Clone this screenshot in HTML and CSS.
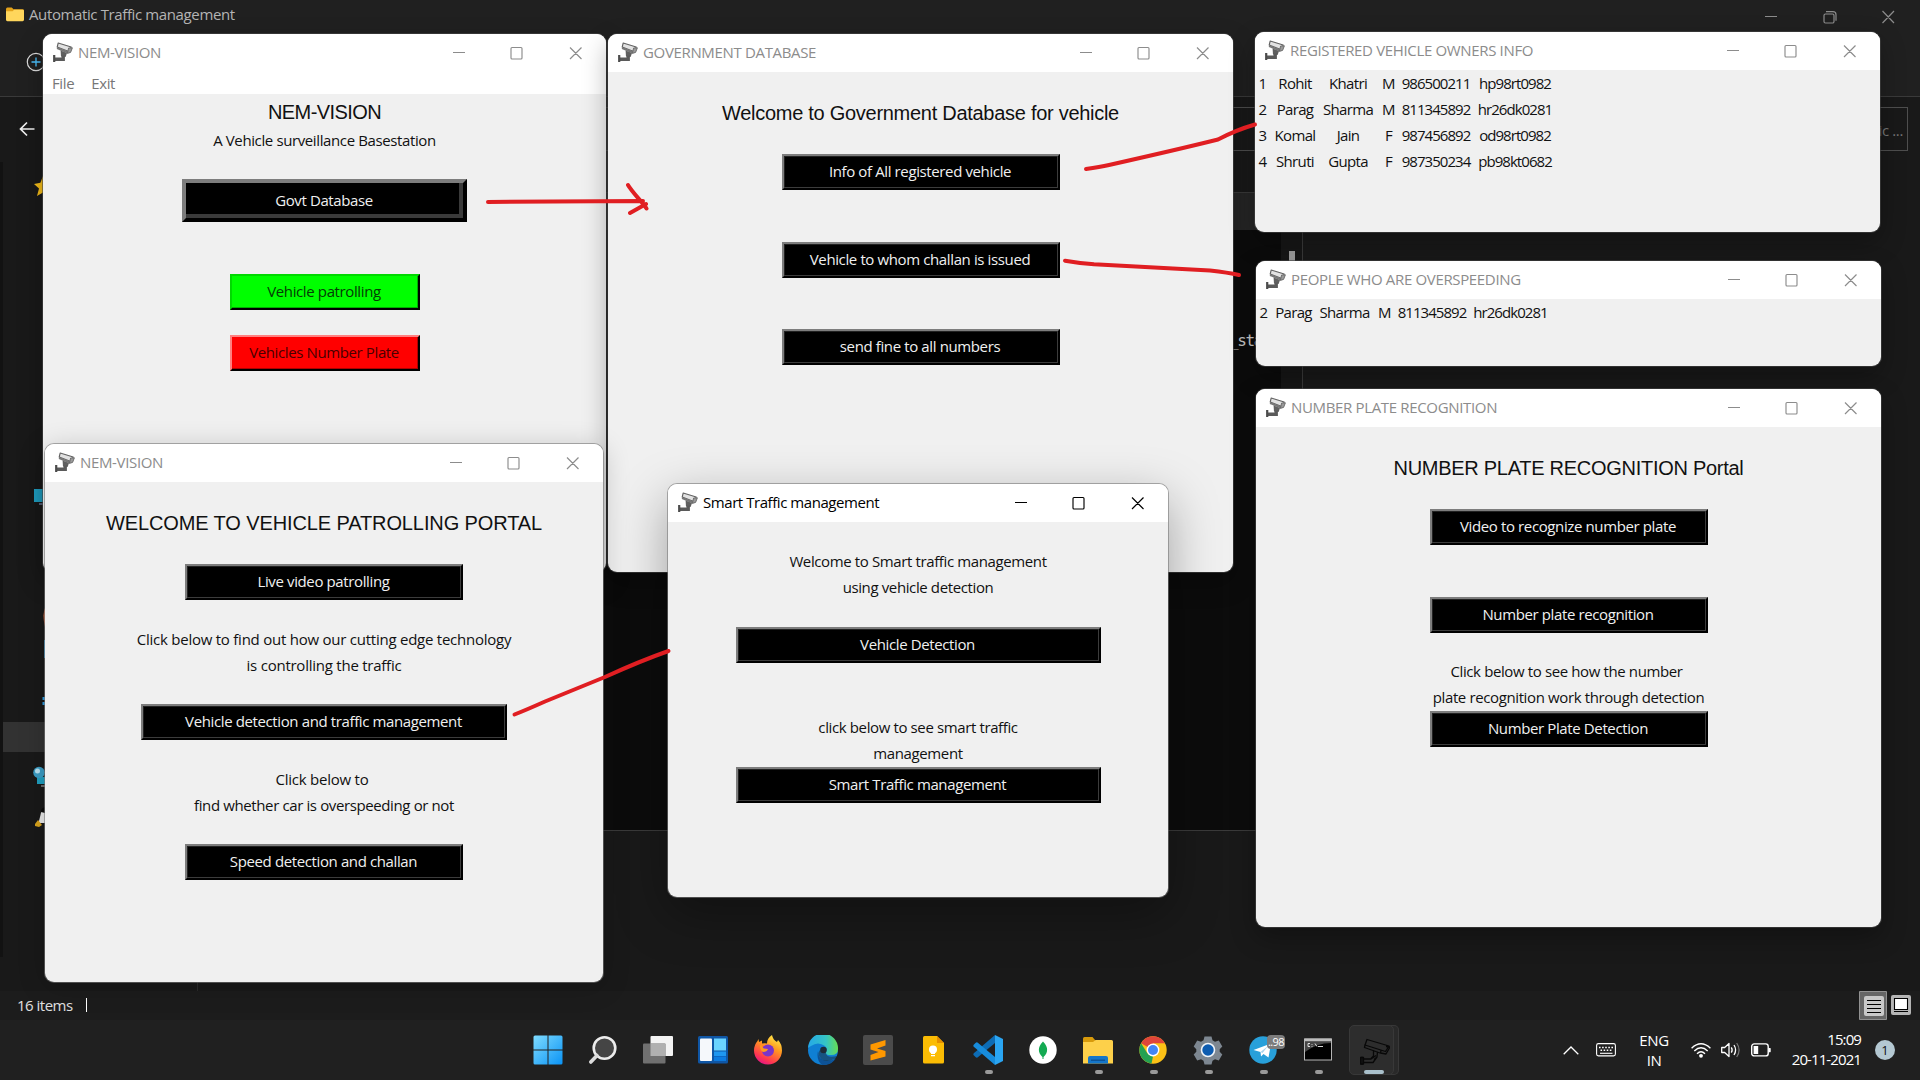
FILE: index.html
```html
<!DOCTYPE html>
<html lang="en">
<head>
<meta charset="utf-8">
<title>Smart Traffic management</title>
<link rel="stylesheet" href="styles.css">
</head>
<body>
<svg class="defs" aria-hidden="true">
  <symbol id="cam" viewBox="0 0 20 20">
    <path d="M5.200 1 L18.200 5 L15.800 9.600 L4.200 5Z" fill="#e2e2e2" stroke="#626262" stroke-width="1.100" stroke-linejoin="round"/>
    <path d="M4 5 L15.400 9.600 L14.600 11.400 L3.800 7Z" fill="#777"/>
    <path d="M15.600 6 L19.400 5.800 L17.600 10.400 L14.400 11.400Z" fill="#9a9a9a" stroke="#666" stroke-width=".9"/>
    <path d="M7.600 8.600 L14 11 L12.600 15 L8 14.400Z" fill="#606060"/>
    <path d="M10.200 13.500 V17.200 H2" fill="none" stroke="#5a5a5a" stroke-width="3.400"/>
    <path d="M1.200 13 V20" stroke="#4c4c4c" stroke-width="2.200"/>
  </symbol>
  <symbol id="caps" viewBox="0 0 143 18">
    <path d="M0 8.500H12M59 3.500h9a1 1 0 0 1 1 1v9.500a1 1 0 0 1 -1 1h-9a1 1 0 0 1 -1 -1v-9.500a1 1 0 0 1 1 -1zM117 3.500l11.500 11.500M128.500 3.500l-11.500 11.500" fill="none" stroke="currentColor" stroke-width="1.150"/>
  </symbol>
</svg>

<div class="desktop">
  <div class="explorer">
    <header class="ex-title">
      <svg class="ex-folder" viewBox="0 0 19 15"><path d="M0 2Q0 0 1.500 0H6L8 2H17.500Q19 2 19 3.500V7H0Z" fill="#e3a21a"/><path d="M0 4H7L8.500 2.500H17.500Q19 2.500 19 4V13Q19 14.500 17.500 14.500H1.500Q0 14.500 0 13Z" fill="#ffd65c"/></svg>
      <span class="ex-name">Automatic Traffic management</span>
      <svg class="ex-caps" viewBox="0 0 132 16"><path d="M0 7.500H12M60.500 5h7a1.500 1.500 0 0 1 1.500 1.500v6a1.500 1.500 0 0 1 -1.500 1.500h-7a1.500 1.500 0 0 1 -1.500 -1.500v-6a1.500 1.500 0 0 1 1.500 -1.500zM61 2.700h7a3 3 0 0 1 3 3v6M117.500 2l11.500 12M129 2l-11.500 12" fill="none" stroke="#8c8c8c" stroke-width="1.200"/></svg>
    </header>
    <div class="ex-tools">
      <svg viewBox="0 0 22 20" width="22" height="20"><circle cx="10" cy="10" r="8.700" fill="none" stroke="#ddd" stroke-width="1.200"/><path d="M10 5.500v9M5.500 10h9" stroke="#4cc2ff" stroke-width="1.300"/></svg>
    </div>
    <div class="ex-address">
      <svg viewBox="0 0 16 16" width="16" height="16"><path d="M15.500 8H1.500M8 1.500L1.500 8L8 14.500" fill="none" stroke="#f2f2f2" stroke-width="1.700"/></svg>
      <div class="ex-box">ic ...</div>
    </div>
    <div class="ex-main">
      <aside class="ex-nav">
        <svg viewBox="0 0 45 800" width="45" height="800">
          <rect x="0" y="5" width="3" height="795" fill="#121212"/>
          <rect x="3" y="565" width="42" height="30" fill="#323232"/>
          <path d="M43 19l-2.600 6.800L34 27l5 4.600L37 39l6-3.500 2 1V17z" fill="#f5bd19"/>
          <path d="M34 332h11v13H34z" fill="#20a4c8"/><path d="M39 347h6" stroke="#9ad" stroke-width="1"/>
          <path d="M45 451q-3 6 0 19z" fill="#d9683c"/><path d="M44 483h1v18h-1z" fill="#2196d8"/>
          <path d="M42.500 540h2.500v3h-2.500zM42.500 545h2.500v3h-2.500z" fill="#2f9be0"/>
          <path d="M37 620h8v7h-8z" fill="#1f9fc0"/><circle cx="39" cy="615.500" r="5.800" fill="#3a9cc4"/><circle cx="37.500" cy="614" r="2.500" fill="#b9e2f2"/><path d="M41 629h4" stroke="#bbb"/>
          <path d="M45 652q-4 1-4.500 6l-2 8h6.500z" fill="#e8e8e8"/><path d="M45 650q-4 1-4 5l4 1z" fill="#0a0a0a"/><path d="M35 667l3-4 4 5-3 2-4-1z" fill="#d9a41c"/>
        </svg>
      </aside>
      <div class="terminal">
        <div class="term-bar"></div>
        <div class="term-body"><span class="term-text">_sta</span><div class="term-scroll"><i></i></div></div>
      </div>
    </div>
    <footer class="ex-status">
      <span class="ex-count">16 items</span><i class="caret"></i>
      <svg class="view-buttons" viewBox="0 0 54 29"><path d="M.5.500h27v28H.5z" fill="#666" stroke="#919191"/><rect x="5" y="5" width="20" height="20" rx="2" fill="#c8c8c8"/><path d="M8 9.500h14M8 13.500h14M8 17.500h14M8 21.500h14" stroke="#000" stroke-width="1.100"/><rect x="32" y="4" width="20" height="20" rx="2" fill="#b4b4b4"/><path d="M35.500 7.500h13v11h-13z" fill="#fff" stroke="#000" stroke-width="1.100"/><path d="M35 20.500h14" stroke="#000"/></svg>
    </footer>
  </div>

  <section class="win w-main">
    <div class="bar"><svg class="cam"><use href="#cam"/></svg><span class="name">NEM-VISION</span><svg class="caps"><use href="#caps"/></svg></div>
    <nav class="menu"><span>File</span><span>Exit</span></nav>
    <div class="body">
      <h1>NEM-VISION</h1>
      <p class="tagline">A Vehicle surveillance Basestation</p>
      <button class="btn thick">Govt Database</button>
      <button class="btn green">Vehicle patrolling</button>
      <button class="btn red">Vehicles Number Plate</button>
    </div>
  </section>

  <section class="win w-gov">
    <div class="bar"><svg class="cam"><use href="#cam"/></svg><span class="name">GOVERNMENT DATABASE</span><svg class="caps"><use href="#caps"/></svg></div>
    <div class="body">
      <h1 class="lead">Welcome to Government Database for vehicle</h1>
      <button class="btn">Info of All registered vehicle</button>
      <button class="btn">Vehicle to whom challan is issued</button>
      <button class="btn">send fine to all numbers</button>
    </div>
  </section>

  <section class="win w-reg">
    <div class="bar"><svg class="cam"><use href="#cam"/></svg><span class="name">REGISTERED VEHICLE OWNERS INFO</span><svg class="caps"><use href="#caps"/></svg></div>
    <div class="people">
      <span>1</span><span>Rohit</span><span>Khatri</span><span>M</span><span>986500211</span><span>hp98rt0982</span>
      <span>2</span><span>Parag</span><span>Sharma</span><span>M</span><span>811345892</span><span>hr26dk0281</span>
      <span>3</span><span>Komal</span><span>Jain</span><span>F</span><span>987456892</span><span>od98rt0982</span>
      <span>4</span><span>Shruti</span><span>Gupta</span><span>F</span><span>987350234</span><span>pb98kt0682</span>
    </div>
  </section>

  <section class="win w-over">
    <div class="bar"><svg class="cam"><use href="#cam"/></svg><span class="name">PEOPLE WHO ARE OVERSPEEDING</span><svg class="caps"><use href="#caps"/></svg></div>
    <div class="people narrow">
      <span>2</span><span>Parag</span><span>Sharma</span><span>M</span><span>811345892</span><span>hr26dk0281</span>
    </div>
  </section>

  <section class="win w-plate">
    <div class="bar"><svg class="cam"><use href="#cam"/></svg><span class="name">NUMBER PLATE RECOGNITION</span><svg class="caps"><use href="#caps"/></svg></div>
    <div class="body">
      <h1 class="lead">NUMBER PLATE RECOGNITION Portal</h1>
      <button class="btn">Video to recognize number plate</button>
      <button class="btn">Number plate recognition</button>
      <p class="shift">Click below to see how the number</p>
      <p>plate recognition work through detection</p>
      <button class="btn">Number Plate Detection</button>
    </div>
  </section>

  <section class="win w-patrol edge">
    <div class="bar"><svg class="cam"><use href="#cam"/></svg><span class="name">NEM-VISION</span><svg class="caps"><use href="#caps"/></svg></div>
    <div class="body">
      <h1 class="lead">WELCOME TO VEHICLE PATROLLING PORTAL</h1>
      <button class="btn">Live video patrolling</button>
      <p class="open">Click below to find out how our cutting edge technology</p>
      <p class="open">is controlling the traffic</p>
      <button class="btn wide">Vehicle detection and traffic management</button>
      <p class="shift open">Click below to</p>
      <p>find whether car is overspeeding or not</p>
      <button class="btn">Speed detection and challan</button>
    </div>
  </section>

  <section class="win w-smart edge active">
    <div class="bar"><svg class="cam"><use href="#cam"/></svg><span class="name">Smart Traffic management</span><svg class="caps"><use href="#caps"/></svg></div>
    <div class="body">
      <p>Welcome to Smart traffic management</p>
      <p>using vehicle detection</p>
      <button class="btn">Vehicle Detection</button>
      <p class="gap">click below to see smart traffic</p>
      <p>management</p>
      <button class="btn">Smart Traffic management</button>
    </div>
  </section>

  <svg class="ink" viewBox="0 0 1920 1020">
    <path d="M488 202L643 201M628 185C632 192 643 203 646.500 208.500M630 213L646 204"/>
    <path d="M1086 169Q1100 167 1109 165Q1180 149 1218 139.500Q1236 130 1255 124.500"/>
    <path d="M1065 260.700Q1078 263 1094 264.300L1210 270.500Q1228 272.500 1239 275"/>
    <path d="M514.500 714.500Q526 710 545 701.500L605 677Q640 661 668.500 651"/>
  </svg>

  <footer class="taskbar">
    <div class="apps">
      <div class="app"><svg viewBox="0 0 30 30"><defs><linearGradient id="gw" x2="1" y2="1"><stop stop-color="#7fdcff"/><stop offset="1" stop-color="#0a93f5"/></linearGradient></defs><path d="M.5 2q0-1.500 1.500-1.500h12.500V14.500H.5zM15.500.500H28q1.500 0 1.500 1.500V14.500h-14zM.5 15.500h14v14H2Q.5 29.500.5 28zM15.500 15.500h14V28q0 1.500-1.500 1.500H15.500z" fill="url(#gw)"/></svg></div>
      <div class="app"><svg viewBox="0 0 30 30"><circle cx="16.500" cy="13" r="10.800" fill="#454545" stroke="#ececec" stroke-width="2.600"/><path d="M9 20.500L2.800 27" stroke="#dcdcdc" stroke-width="3.600" stroke-linecap="round"/></svg></div>
      <div class="app"><svg viewBox="0 0 30 30"><rect x="7.500" y="1" width="22.500" height="20" rx="1" fill="#f3f3f3"/><rect x="0" y="8.500" width="22.500" height="20" rx="1" fill="#707070"/><path d="M7.500 8.500h15v12.500h-15z" fill="#b0b0b0"/></svg></div>
      <div class="app"><svg viewBox="0 0 30 30"><rect y="1" width="30" height="27.500" rx="1.500" fill="#0f56a5"/><rect x="2" y="3.500" width="12" height="22.500" rx="1" fill="#f5f8fb"/><path d="M16 3.500h12v12H16z" fill="#6bd4ff"/><path d="M16 16.500h12v4.500H16z" fill="#1e97f0"/><path d="M16 21.500h12v4.500H16z" fill="#0c7be0"/></svg></div>
      <div class="app"><svg viewBox="0 0 30 30"><defs><linearGradient id="gf" x1=".8" y1="0" x2=".3" y2="1"><stop stop-color="#fff04c"/><stop offset=".4" stop-color="#ff9a1f"/><stop offset=".8" stop-color="#ff3750"/><stop offset="1" stop-color="#e31587"/></linearGradient></defs><path d="M19 0q1 5 5 7l1-2q4 4 4 10.500A14 14 0 0 1 1 15.500Q1 10 4.500 6l1-2 .5 3 3-1.500L9 8.500q3-.5 5 0Q14 3 19 0z" fill="url(#gf)"/><circle cx="15" cy="15.500" r="6" fill="#7a35c9"/><path d="M9 8.500q-1 4 2 5l4 .5q-1 3-5 3Q7 15 7 11z" fill="#ff9a1f"/></svg></div>
      <div class="app"><svg viewBox="0 0 30 30"><defs><linearGradient id="ge" x2="1"><stop stop-color="#25a8e8"/><stop offset=".6" stop-color="#35c4c4"/><stop offset="1" stop-color="#67dc52"/></linearGradient></defs><circle cx="15" cy="15" r="15" fill="#0f7fd3"/><path d="M0 13A15 15 0 0 1 30 14Q30 20 23 20 17 20 17.500 17 20 14 17 11 10 6 3 11 1 12 0 13z" fill="url(#ge)"/><path d="M10 16q0 10 10 9.500 4 0 7.500-1.500Q22 31 14 30 8 25 10 16z" fill="#0d5296"/><path d="M18 17.500q-2-5-6.500-2-2.500 4 2 8.500Q18 28 28 23.500L29 21Q18 23.500 18 17.500z" fill="#202020" fill-opacity=".45"/><circle cx="15.500" cy="15" r="3.300" fill="#1d2b38"/></svg></div>
      <div class="app"><svg viewBox="0 0 30 30"><rect width="30" height="30" rx="2" fill="#4b4b4b"/><path d="M22.500 5v5.500L14 13.500l8.500 2.500v5.500L7.500 25.500V20l8-3-8-2.500V9.500z" fill="#ff9800"/></svg></div>
      <div class="app"><svg viewBox="0 0 30 30"><path d="M6.500 1H19L26 8V27Q26 28.500 24.500 28.500H6.500Q5 28.500 5 27V2.500Q5 1 6.500 1z" fill="#fbbc04"/><path d="M19 1L26 8H19z" fill="#e58f00"/><circle cx="15" cy="14.500" r="4" fill="#fff"/><path d="M13 17h4v2h-4zM13 20h4v1.200h-4z" fill="#fff"/></svg></div>
      <div class="app run"><svg viewBox="0 0 30 30"><path d="M22 0L30 4V26L22 30z" fill="#2aa5f2"/><path d="M22 0V8L4.500 22.500Q3.500 23 2.500 22L.5 20Q0 19 .8 18.300z" fill="#0d6cb5"/><path d="M22 30V22L4.500 7.500Q3.500 7 2.500 8L.5 10Q0 11 .8 11.700z" fill="#178cdc"/></svg></div>
      <div class="app"><svg viewBox="0 0 30 30"><circle cx="15" cy="15" r="13.700" fill="#fff"/><path d="M15 6.500Q23 15 15.500 22V24h-1V22Q7 15 15 6.500z" fill="#13aa52"/></svg></div>
      <div class="app run"><svg viewBox="0 0 30 30"><path d="M0 3.500Q0 2 1.500 2H9.500L12 5V9H0z" fill="#d79a0b"/><path d="M0 7H10L12.500 5H28.500Q30 5 30 6.500V28.500H0z" fill="#fdd04a"/><path d="M5 28.500V23Q5 21 7 21H23Q25 21 25 23V28.500z" fill="#1576c9"/><path d="M8 25.200H22" stroke="#0b4d8c" stroke-width="1.200"/></svg></div>
      <div class="app run"><svg viewBox="0 0 30 30"><circle cx="15" cy="15" r="13.700" fill="#fbc116"/><path d="M15 15L3.100 8.200A13.700 13.700 0 0 1 26.900 8.200H15z" fill="#e0453a"/><path d="M3.100 8.200L9.500 18.500 15 21.500 13.500 28.600A13.700 13.700 0 0 1 3.100 8.200z" fill="#24a152"/><circle cx="15" cy="15" r="6.400" fill="#fff"/><circle cx="15" cy="15" r="5" fill="#4285f4"/></svg></div>
      <div class="app run"><svg viewBox="0 0 30 30"><path d="M11.500 1.500h7l1 3.800 2.500 1.400 3.800-1.100 3.500 6-2.600 2.600v2.600l2.600 2.600-3.500 6-3.800-1.100-2.500 1.400-1 3.800h-7l-1-3.800-2.500-1.400-3.800 1.100-3.500-6 2.600-2.600v-2.600L.7 11.600l3.500-6L8 6.700l2.500-1.400z" fill="#7d8791"/><circle cx="15" cy="15" r="6.500" fill="#0d5cb0" stroke="#f0f4f8" stroke-width="1.600"/></svg></div>
      <div class="app run"><svg viewBox="0 0 30 30"><circle cx="15" cy="15" r="13.700" fill="#28a0da"/><path d="M5.500 15L23 8.500 20.500 22.500 15.500 19 13 21.500 12.500 17z" fill="#fff"/><path d="M12.500 17L20 11 14.500 18z" fill="#a9d4ec"/></svg><span class="badge">..98</span></div>
      <div class="app run"><svg viewBox="0 0 30 30"><rect x="1.500" y="4" width="27" height="21" fill="#000" stroke="#b5b5b5" stroke-width="1"/><path d="M1.500 3.500h27v3h-27z" fill="#bdbdbd"/><path d="M2 17Q14 8 28 8V7H2z" fill="#454545"/><path d="M5 8.500v3M5 8.500h2M5 11.500h2M9 9v.8M9 11v.8M12 8.500l2 3M15 11.500h5" stroke="#eee" stroke-width=".9" fill="none"/></svg></div>
      <div class="app cctv"><svg viewBox="0 0 30 30"><path d="M7 2.500L29 9 25.500 14.500 5 8zM26 9.500L30 10 26 17 20.500 16 21 13.500M5 8L4.500 10.500 20 16M13.500 13V19L11 21.500M17.500 14.500L17 20 14 22.500M2 19.500V28M.5 20.500H3.500V27H.5zM3.500 22H11L16 18.500M3.500 25.500H13L17 20" fill="none" stroke="#080808" stroke-width="1.300" stroke-linejoin="round"/></svg></div>
    </div>
    <div class="tray">
      <svg class="t-chev" viewBox="0 0 16 9"><path d="M.7 8.300L8 1l7.300 7.300" fill="none" stroke="#fff" stroke-width="1.300"/></svg>
      <svg class="t-key" viewBox="0 0 20 14"><rect x=".6" y=".6" width="18.800" height="12.300" rx="1.800" fill="none" stroke="#fff" stroke-width="1.100"/><path d="M3 4.500h14M4.500 7.200h12" stroke="#fff" stroke-width="1.400" stroke-dasharray="1.600 1.500"/><path d="M4 10.300h12.500" stroke="#fff" stroke-width="1.100"/></svg>
      <div class="lang">ENG<br>IN</div>
      <svg class="t-wifi" viewBox="0 0 20 15"><g fill="none" stroke="#fff" stroke-width="1.400"><path d="M.6 5.200Q10-3.500 19.400 5.200M3.300 8Q10 1.700 16.700 8M6 10.700Q10 7 14 10.700"/></g><circle cx="10" cy="12.800" r="1.900" fill="#fff"/></svg>
      <svg class="t-vol" viewBox="0 0 20 16"><path d="M.7 5.500h3L8 1.500v13l-4.300-4h-3z" fill="none" stroke="#fff" stroke-width="1.300" stroke-linejoin="round"/><path d="M10.300 5.300Q12 8 10.300 10.700M13 3Q16.200 8 13 13" fill="none" stroke="#fff" stroke-width="1.300"/><path d="M15.700 1Q20.500 8 15.700 15" fill="none" stroke="#777" stroke-width="1.200"/></svg>
      <svg class="t-bat" viewBox="0 0 20 14"><rect x=".7" y=".9" width="16.500" height="12" rx="2.500" fill="none" stroke="#fff" stroke-width="1.400"/><path d="M2.600 3h4.600v8H2.600zM17.500 5h1.700q.5 0 .5.600v3q0 .6-.5.600h-1.700z" fill="#fff"/></svg>
      <div class="clock">15:09<br>20-11-2021</div>
      <div class="note">1</div>
    </div>
  </footer>
</div>
</body>
</html>
```
FILE: styles.css
```css
* { box-sizing: border-box; }
body { margin: 0; background: #191919; font-family: "Open Sans", "Noto Sans", sans-serif; font-size: 15px; letter-spacing: -0.38px; }
h1, p { margin: 0; font-weight: 400; }
svg { display: block; flex: none; }
.defs { position: absolute; width: 0; height: 0; }
.desktop { position: relative; width: 1920px; height: 1080px; overflow: hidden; display: flex; flex-direction: column; }

/* file explorer behind the windows */
.explorer { height: 1020px; display: flex; flex-direction: column; background: #191919; }
.ex-title { height: 36px; display: flex; align-items: flex-start; padding: 7px 23px 0 6px; background: #202020; color: #b4b4b4; }
.ex-folder { width: 18px; height: 15px; }
.ex-name { margin: -1px 0 0 5px; line-height: 17px; }
.ex-caps { width: 132px; height: 16px; margin: 2px 0 0 auto; }
.ex-tools { height: 61px; padding: 16px 0 0 26px; background: #202020; border-bottom: 1px solid #3a3a3a; }
.ex-address { height: 95px; display: flex; align-items: flex-start; padding: 10px 12px 0 19px; }
.ex-address > svg { margin-top: 14px; }
.ex-box { flex: 1; margin-left: 60px; height: 44px; border: 1px solid #4e4e4e; text-align: right; padding-right: 4px; line-height: 44px; color: #777; }
.ex-main { height: 799px; display: flex; align-items: flex-start; }
.ex-nav { width: 198px; height: 799px; border-right: 1px solid #2b2b2b; }
.ex-nav svg { margin-top: -35px; }
.terminal { width: 1105px; height: 639px; background: #0c0c0c; border: 1px solid #3a3a3a; border-left: 0; }
.term-bar { height: 37px; background: #262626; }
.term-body { display: flex; justify-content: flex-end; height: 600px; }
.term-text { margin-top: 101px; font: 16px/20px "DejaVu Sans Mono", monospace; letter-spacing: -1.4px; color: #ccc; margin-right: 19px; }
.term-scroll { width: 21px; background: #171717; padding: 21px 0 0 8px; }
.term-scroll i { display: block; width: 6px; height: 60px; background: #9e9e9e; }
.ex-status { height: 29px; display: flex; align-items: center; padding: 0 7px 0 17px; background: #1c1c1c; color: #e0e0e0; }
.ex-count { padding-bottom: 2px; letter-spacing: -0.5px; }
.caret { width: 1px; height: 14px; margin: -2px 0 0 13px; background: #fff; }
.view-buttons { width: 54px; height: 29px; margin-left: auto; }

/* application windows */
.win { position: absolute; display: flex; flex-direction: column; background: #f0f0f0; border-radius: 9px; overflow: hidden; box-shadow: 0 0 0 1px rgba(70, 70, 70, .6), 0 10px 26px rgba(0, 0, 0, .3); }
.edge { box-shadow: 0 0 0 1px rgba(120, 120, 120, .6), 0 4px 28px rgba(0, 0, 0, .2); }
.active { box-shadow: 0 0 0 1px rgba(120, 120, 120, .6), 0 16px 50px rgba(0, 0, 0, .34); }
.w-main { left: 43px; top: 34px; width: 563px; height: 538px; }
.w-gov { left: 608px; top: 34px; width: 625px; height: 538px; }
.w-reg { left: 1255px; top: 32px; width: 625px; height: 200px; }
.w-over { left: 1256px; top: 261px; width: 625px; height: 105px; }
.w-plate { left: 1256px; top: 389px; width: 625px; height: 538px; }
.w-patrol { left: 45px; top: 444px; width: 558px; height: 538px; }
.w-smart { left: 668px; top: 484px; width: 500px; height: 413px; }
.bar { height: 38px; flex: none; display: flex; align-items: center; padding: 0 10px; background: #fff; color: #8c8c8c; }
.bar .cam { width: 20px; height: 20px; margin-top: -2px; }
.bar .name { margin: -2px 0 0 5px; letter-spacing: -0.34px; }
.bar .caps { width: 143px; height: 18px; margin-left: auto; }
.active .bar { color: #000; }
.active .name { letter-spacing: -0.44px; }
.menu { height: 22px; flex: none; display: flex; align-items: center; gap: 17px; padding-left: 9px; background: #fff; color: #777; }
.body { display: flex; flex-direction: column; align-items: center; color: #111; }
h1 { font: 20px/26px "Liberation Sans", Arial, sans-serif; letter-spacing: -0.28px; }
.w-main h1 { letter-spacing: -0.59px; margin-top: 5px; }
.w-patrol h1 { letter-spacing: -0.11px; }
.lead { margin-top: 28px; }
p { line-height: 24px; height: 26px; white-space: nowrap; }
.shift { margin-left: -4px; }
.open { letter-spacing: -0.24px; }

.btn { flex: none; width: 278px; height: 36px; padding: 0 1px 2px 0; background: #000; color: #f0f0f0; font: inherit; letter-spacing: -0.38px; border: 2px solid; border-color: #7d7d7d #000 #000 #7d7d7d; box-shadow: inset -1px -1px #3c3c3c, inset 1px 1px #222; border-radius: 0; }
.thick { width: 285px; height: 43px; margin-top: 25px; border-width: 4px; box-shadow: inset -4px -4px #3a3a3a; }
.green { width: 190px; margin-top: 52px; background: #0f0; color: #053b05; border-color: #00d900 #000 #000 #00d900; box-shadow: inset -1px -1px #00b000; }
.red { width: 190px; margin-top: 25px; background: #f00; color: #480000; border-color: #ff8080 #000 #000 #ff8080; box-shadow: inset -1px -1px #b00000; }
.w-main .tagline { margin-top: 3px; }
.w-gov .lead + .btn, .w-plate .lead + .btn { margin-top: 28px; }
.w-gov .btn + .btn, .w-plate .btn + .btn { margin-top: 51.500px; }
.w-plate .btn + p { margin-top: 26.500px; }
.w-plate p + .btn { margin-top: 0; }
.w-patrol .lead + .btn { margin-top: 28px; }
.w-patrol .btn + p { margin-top: 27px; }
.w-patrol p + .btn { margin-top: 25px; }
.wide { width: 366px; }
.w-smart .btn { width: 365px; }
.w-smart .body { padding-top: 27px; }
.w-smart p + .btn { margin-top: 26px; }
.w-smart .gap { margin-top: 52px; }
.w-smart .gap + p + .btn { margin-top: 0; }

.people { display: grid; grid-template-columns: 15px 50px 56px 25px 70px 88px; grid-auto-rows: 26.200px; justify-items: center; align-items: center; color: #111; letter-spacing: -0.65px; line-height: 20px; }
.people span { padding-bottom: 1px; }
.people span:nth-child(6n), .people span:nth-child(6n + 5) { letter-spacing: -0.95px; }
.narrow { grid-template-columns: 15px 45px 57px 23px 72px 85px; }

/* pen strokes linking the windows */
.ink { position: absolute; left: 0; top: 0; width: 1920px; height: 1020px; fill: none; stroke: #e01e22; stroke-width: 4; stroke-linecap: round; stroke-linejoin: round; }

/* taskbar */
.taskbar { height: 60px; display: flex; justify-content: space-between; background: #202020; color: #fff; }
.apps { display: flex; margin-left: 521px; }
.app { position: relative; width: 55px; height: 60px; display: flex; justify-content: center; padding: 15px 1px 0 0; }
.app svg { width: 30px; height: 30px; }
.run::after { content: ""; position: absolute; left: 24px; bottom: 6px; width: 8px; height: 4px; border-radius: 2px; background: #9a9a9a; }
.badge { position: absolute; left: 31px; top: 15px; width: 18px; height: 14px; border-radius: 4px; background: #7c7c7c; font-size: 11px; line-height: 14px; text-align: center; letter-spacing: -0.6px; }
.cctv { width: 45px; height: 50px; margin: 5px 0 0 3px; padding: 11px 0 0 6px; border: 1px solid #383838; border-radius: 5px; background: #2d2d2d; box-shadow: 5px 0 0 -1px #292929, 5px 0 0 #383838; }
.cctv::after { content: ""; position: absolute; left: 14px; bottom: 0; width: 20px; height: 4px; border-radius: 2px; background: #a9c0cb; }
.tray { display: flex; align-items: center; padding-right: 25px; }
.t-chev { width: 16px; height: 9px; margin-right: 17px; }
.t-key { width: 20px; height: 14px; margin-right: 23px; }
.lang { width: 30px; text-align: center; line-height: 20px; padding-bottom: 1px; }
.t-wifi { width: 20px; height: 15px; margin-left: 22px; }
.t-vol { width: 20px; height: 16px; margin-left: 10px; }
.t-bat { width: 20px; height: 14px; margin-left: 10px; }
.clock { width: 90px; text-align: right; line-height: 20px; letter-spacing: -0.9px; padding-bottom: 2px; }
.note { width: 20px; height: 20px; margin-left: 14px; border-radius: 50%; background: #b4c8d2; color: #111; text-align: center; font-size: 13px; line-height: 20px; letter-spacing: 0; }
```
